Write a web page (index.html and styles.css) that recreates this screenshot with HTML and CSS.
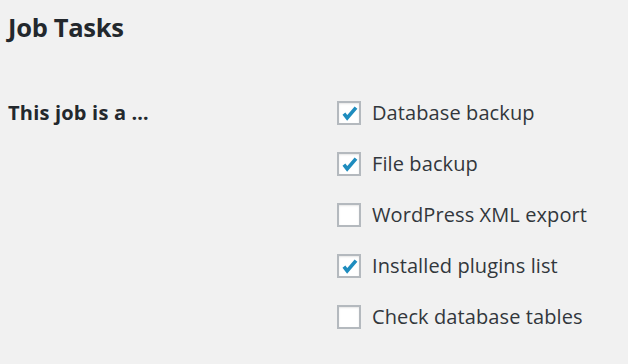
FILE: index.html
```html
<!DOCTYPE html>
<html>
<head>
<meta charset="utf-8">
<link rel="stylesheet" href="styles.css">
</head>
<body>
<div class="page">
  <h2 class="title">Job Tasks</h2>
  <div class="form-row">
    <div class="label">This job is a …</div>
    <div class="options">
      <div class="opt"><span class="box checked"><svg viewBox="0 0 20 20" width="20" height="20"><path d="M4.9 10.6 L8.2 14.9 L17 4.6" fill="none" stroke="#1e8cbe" stroke-width="3.6" stroke-linecap="butt" stroke-linejoin="miter"/></svg></span><span class="text">Database backup</span></div>
      <div class="opt"><span class="box checked"><svg viewBox="0 0 20 20" width="20" height="20"><path d="M4.9 10.6 L8.2 14.9 L17 4.6" fill="none" stroke="#1e8cbe" stroke-width="3.6" stroke-linecap="butt" stroke-linejoin="miter"/></svg></span><span class="text">File backup</span></div>
      <div class="opt"><span class="box"></span><span class="text">WordPress XML export</span></div>
      <div class="opt"><span class="box checked"><svg viewBox="0 0 20 20" width="20" height="20"><path d="M4.9 10.6 L8.2 14.9 L17 4.6" fill="none" stroke="#1e8cbe" stroke-width="3.6" stroke-linecap="butt" stroke-linejoin="miter"/></svg></span><span class="text">Installed plugins list</span></div>
      <div class="opt"><span class="box"></span><span class="text">Check database tables</span></div>
    </div>
  </div>
</div>
</body>
</html>
```
FILE: styles.css
```css
html, body {
  margin: 0;
  padding: 0;
  background: #f1f1f1;
}
.page {
  padding: 12px 0 0 8px;
  font-family: "Open Sans", "Noto Sans", sans-serif;
}
.title {
  margin: 0;
  font-size: 25.5px;
  line-height: 30px;
  font-weight: 700;
  color: #23282d;
  letter-spacing: -0.3px;
}
.form-row {
  display: grid;
  grid-template-columns: 329px 1fr;
  margin-top: 59px;
}
.label {
  font-size: 20px;
  font-weight: 700;
  color: #23282d;
  line-height: 24px;
  letter-spacing: 0.2px;
}
.options {
  display: flex;
  flex-direction: column;
  gap: 27px;
}
.opt {
  display: flex;
  align-items: center;
  gap: 11px;
  height: 24px;
}
.box {
  box-sizing: border-box;
  width: 24px;
  height: 24px;
  border: 2px solid #b4b9be;
  background: #fff;
  box-shadow: inset 0 1px 2px rgba(0,0,0,0.1);
  display: flex;
  align-items: center;
  justify-content: center;
}
.box svg { display: block; }
.text {
  font-size: 20px;
  color: #32373c;
  line-height: 24px;
  letter-spacing: 0.1px;
}
```
